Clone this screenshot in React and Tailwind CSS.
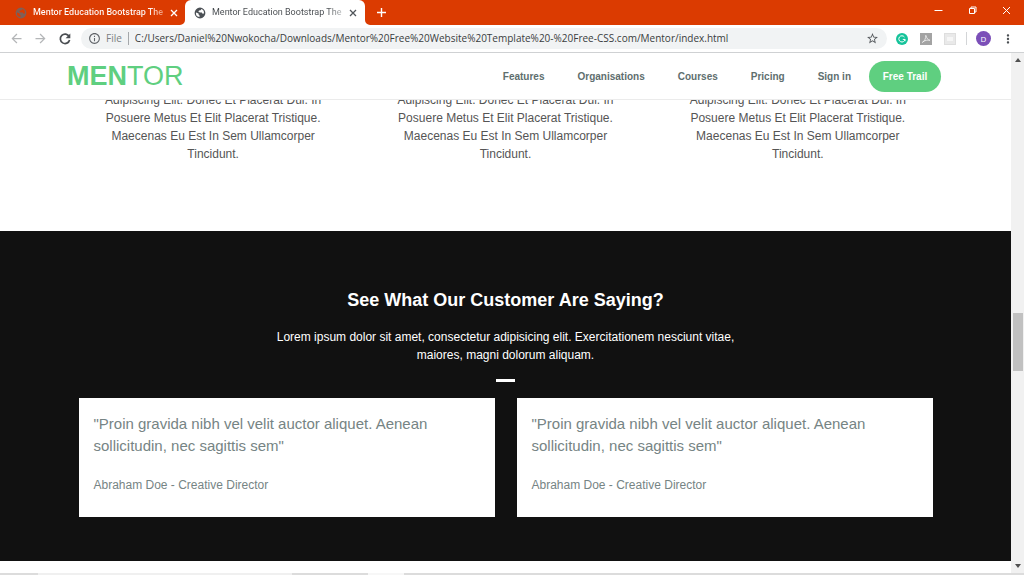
import {
  MdArrowBack,
  MdArrowForward,
  MdInfoOutline,
  MdStarBorder,
  MdMoreVert,
} from "react-icons/md";

const PAGE_URL =
  "C:/Users/Daniel%20Nwokocha/Downloads/Mentor%20Free%20Website%20Template%20-%20Free-CSS.com/Mentor/index.html";

const navLinks = ["Features", "Organisations", "Courses", "Pricing", "Sign in"];

function GlobeIcon({ className }) {
  return (
    <svg className={className} viewBox="0 0 12 12" fill="none" aria-hidden="true">
      <path
        fillRule="evenodd"
        d="M6 .6a5.400 5.400 0 1 1 0 10.800A5.400 5.400 0 0 1 6 .6ZM7.400 2.100 6.600 3.200 5 3.400 4.400 4.800 6 5.400 7.800 5.600 8.600 6.800 9.900 6.600A4.100 4.100 0 0 0 7.400 2.100ZM2 5.400A4.100 4.100 0 0 0 5.400 10L5.700 8.800 4.700 7.700 4.500 6.500Z"
        fill="currentColor"
      />
    </svg>
  );
}

function CloseIcon() {
  return (
    <svg className="size-[10px]" viewBox="0 0 10 10" fill="none" stroke="currentColor" strokeWidth="1.3" aria-hidden="true">
      <path d="m2 2 6 6M8 2 2 8" />
    </svg>
  );
}

function Tab({ active }) {
  return (
    <div
      className={
        active
          ? "relative flex h-full w-[180px] items-center rounded-t-md bg-white pl-[9px] pr-[7px] text-[#50555a]"
          : "flex h-full w-[185px] items-center pl-[15px] pr-[6px] text-white"
      }
    >
      {active && (
        <svg className="absolute bottom-0 -left-[5px] h-[5px] w-[190px] text-white" viewBox="0 0 190 5" aria-hidden="true">
          <path d="M0 5A5 5 0 0 0 5 0V5ZM190 5A5 5 0 0 1 185 0V5Z" fill="currentColor" />
        </svg>
      )}
      <GlobeIcon className={active ? "size-3 shrink-0 text-[#4c5156]" : "size-3 shrink-0 text-[#7f5f57]"} />
      <span
        className={
          active
            ? "ml-[6px] flex-1 bg-linear-to-r from-[#45494d] from-88% to-[#c4c6c8] bg-clip-text whitespace-nowrap text-transparent"
            : "ml-[6px] flex-1 bg-linear-to-r from-white from-88% to-[#ea8a66] bg-clip-text font-medium whitespace-nowrap text-transparent"
        }
      >
        Mentor Education Bootstrap The
      </span>
      <button type="button" aria-label="Close tab" className="ml-[5px]">
        <CloseIcon />
      </button>
    </div>
  );
}

function TabStrip() {
  return (
    <div className="flex h-[25px] shrink-0 bg-[#db3b01] font-[Roboto,sans-serif] text-[9px]">
      <Tab />
      <Tab active />
      <button type="button" aria-label="New tab" className="ml-[11px] text-white">
        <svg className="size-[11px]" viewBox="0 0 11 11" stroke="currentColor" strokeWidth="1.400" aria-hidden="true">
          <path d="M5.500 1v9M1 5.500h9" />
        </svg>
      </button>
      <div className="ml-auto flex items-center pb-[4px] text-white">
        <button type="button" aria-label="Minimise" className="flex w-[34px] justify-center">
          <svg className="size-[9px]" viewBox="0 0 9 9" stroke="currentColor"><path d="M.5 4.500h8" /></svg>
        </button>
        <button type="button" aria-label="Restore" className="flex w-[34px] justify-center">
          <svg className="size-[9px]" viewBox="0 0 9 9" fill="none" stroke="currentColor">
            <path d="M1.500 2.500h5v5h-5zM3 2V1h5v5H7" />
          </svg>
        </button>
        <button type="button" aria-label="Close window" className="flex w-[35px] justify-center">
          <svg className="size-[9px]" viewBox="0 0 9 9" fill="none" stroke="currentColor">
            <path d="m1 1 7 7M8 1 1 8" />
          </svg>
        </button>
      </div>
    </div>
  );
}

function Toolbar() {
  return (
    <div className="flex h-[28px] shrink-0 items-center border-b border-[#cfd1d3] bg-white pr-[9px] pl-[9px] font-['Open_Sans',sans-serif] text-[10px]">
      <div className="flex items-center gap-[9px]">
        <button type="button" aria-label="Back" className="text-[#b4b6b8]"><MdArrowBack className="size-[15px]" /></button>
        <button type="button" aria-label="Forward" className="text-[#b4b6b8]"><MdArrowForward className="size-[15px]" /></button>
        <button type="button" aria-label="Reload" className="text-[#4a4e52]">
          <svg className="size-[16px]" viewBox="0 0 16 16" fill="none" aria-hidden="true">
            <path d="M12.200 5.600A4.700 4.700 0 1 0 12.600 9" stroke="currentColor" strokeWidth="1.700" />
            <path d="M13.300 2.600V7.300H8.600Z" fill="currentColor" />
          </svg>
        </button>
      </div>
      <div className="ml-[8px] flex h-[21px] flex-1 items-center rounded-full bg-[#f1f3f4] pr-[8px] pl-[7px]">
        <MdInfoOutline className="size-[13px] text-[#5f6368]" />
        <label htmlFor="address" className="ml-[5px] border-r border-[#a5a8ab] pr-[6px] leading-[13px] text-[#7b7f83]">File</label>
        <input
          id="address"
          type="text"
          defaultValue={PAGE_URL}
          className="ml-[6px] min-w-0 flex-1 bg-transparent text-[#3a3d40] outline-none"
        />
        <button type="button" aria-label="Bookmark this page" className="text-[#55595d]"><MdStarBorder className="size-[13px]" /></button>
      </div>
      <div className="ml-[9px] flex items-center">
        <button type="button" aria-label="Grammar extension">
          <svg className="size-[12px]" viewBox="0 0 12 12" fill="none">
            <circle cx="6" cy="6" r="6" fill="#15c39a" />
            <path d="M8.400 4A3.100 3.100 0 1 0 9 6.400H6.800M9 6.400v1.800" stroke="#fff" />
          </svg>
        </button>
        <button type="button" aria-label="PDF extension" className="ml-[12px]">
          <svg className="size-[12px]" viewBox="0 0 12 12" fill="none">
            <path d="M0 0h12v12H0z" fill="#a3a3a3" />
            <path d="M2.300 9.400C4.600 8.300 6 5 5.800 2.300c1 3.300 2.300 4.800 4.200 5C7.600 6.700 4.700 7.200 2.300 9.400Z" stroke="#f2f2f2" strokeWidth=".8" />
          </svg>
        </button>
        <button type="button" aria-label="Extension" className="ml-[12px]">
          <svg className="size-[12px]" viewBox="0 0 12 12">
            <path d="M0 0h12v12H0z" fill="#dedede" />
            <path d="M1 1h10v10H1z" fill="#e9e9e9" />
            <path d="M3 4h6v4H3z" fill="#f6f6f6" />
          </svg>
        </button>
        <span className="ml-[10px] h-[13px] w-px bg-[#d3d5d7]" />
        <button
          type="button"
          aria-label="Profile"
          className="ml-[9px] flex size-[15px] items-center justify-center rounded-full bg-[#7b4fb8] text-[8px] text-white"
        >
          D
        </button>
        <button type="button" aria-label="Menu" className="ml-[10px] text-[#4a4e52]"><MdMoreVert className="size-[14px]" /></button>
      </div>
    </div>
  );
}

function SiteHeader() {
  return (
    <header className="flex h-[47px] shrink-0 items-center justify-between border-b border-[#ebebeb] pr-[70px] pl-[67px]">
      <a href="#" className="text-[27px] leading-[30px] text-[#5fcf80]">
        <strong>MEN</strong>TOR
      </a>
      <nav className="flex items-center gap-[33px] text-[10px] font-bold text-[#5e6e6e]">
        {navLinks.map((label) => (
          <a key={label} href="#">{label}</a>
        ))}
        <a href="#" className="-ml-[15px] flex h-[31px] w-[72px] items-center justify-center rounded-full bg-[#5fcf80] text-white">
          Free Trail
        </a>
      </nav>
    </header>
  );
}

function Blurb() {
  return (
    <p className="text-center">
      Adipiscing Elit. Donec Et Placerat Dui. In
      <br />
      Posuere Metus Et Elit Placerat Tristique.
      <br />
      Maecenas Eu Est In Sem Ullamcorper
      <br />
      Tincidunt.
    </p>
  );
}

function Testimonial() {
  return (
    <figure className="bg-white px-[15px] pt-[15px] pb-[23px] text-[#768484]">
      <blockquote className="text-[15px] leading-[22px]">
        "Proin gravida nibh vel velit auctor aliquet. Aenean sollicitudin, nec sagittis sem"
      </blockquote>
      <figcaption className="mt-[19px] text-[12px] leading-[18px]">Abraham Doe - Creative Director</figcaption>
    </figure>
  );
}

function Scrollbar() {
  return (
    <div className="flex w-[13px] shrink-0 flex-col items-center justify-between bg-[#f1f1f1] py-[5px]" aria-hidden="true">
      <svg className="h-[4px] w-[6px]" viewBox="0 0 6 4"><path d="M3 0 6 4H0z" fill="#505050" /></svg>
      <div className="mt-[57px] h-[58px] w-[10px] bg-[#c1c1c1]" />
      <svg className="h-[4px] w-[6px]" viewBox="0 0 6 4"><path d="M3 4 6 0H0z" fill="#505050" /></svg>
    </div>
  );
}

export default function App() {
  return (
    <div className="flex h-screen flex-col overflow-hidden bg-white">
      <TabStrip />
      <Toolbar />
      <div className="flex min-h-0 flex-1 font-['Liberation_Sans',Arial,sans-serif]">
        <div className="flex min-w-0 flex-1 flex-col">
          <SiteHeader />
          <main className="min-h-0 flex-1 overflow-hidden">
            <section className="mx-auto -mt-[9px] grid max-w-[877px] grid-cols-3 pb-[68px] text-[12px] leading-[18px] text-[#555]">
              <Blurb />
              <Blurb />
              <Blurb />
            </section>
            <section className="bg-[#111] pt-[57px] pb-[44px] text-center text-white">
              <h2 className="text-[18px] leading-[24px] font-bold">See What Our Customer Are Saying?</h2>
              <p className="mx-auto mt-[16px] max-w-[480px] text-[12px] leading-[18px]">
                Lorem ipsum dolor sit amet, consectetur adipisicing elit. Exercitationem nesciunt vitae, maiores, magni
                dolorum aliquam.
              </p>
              <div className="mx-auto mt-[15px] h-[3px] w-[19px] bg-white" />
              <div className="mx-auto mt-[16px] grid max-w-[854px] grid-cols-2 gap-[22px] text-left">
                <Testimonial />
                <Testimonial />
              </div>
            </section>
          </main>
        </div>
        <Scrollbar />
      </div>
      <div className="flex h-[2px] shrink-0 bg-[#dcdcdc]">
        <span className="ml-[38px] w-[254px] bg-[#f0f0f0]" />
        <span className="ml-[76px] w-[36px] bg-[#f7f7f7]" />
      </div>
    </div>
  );
}
